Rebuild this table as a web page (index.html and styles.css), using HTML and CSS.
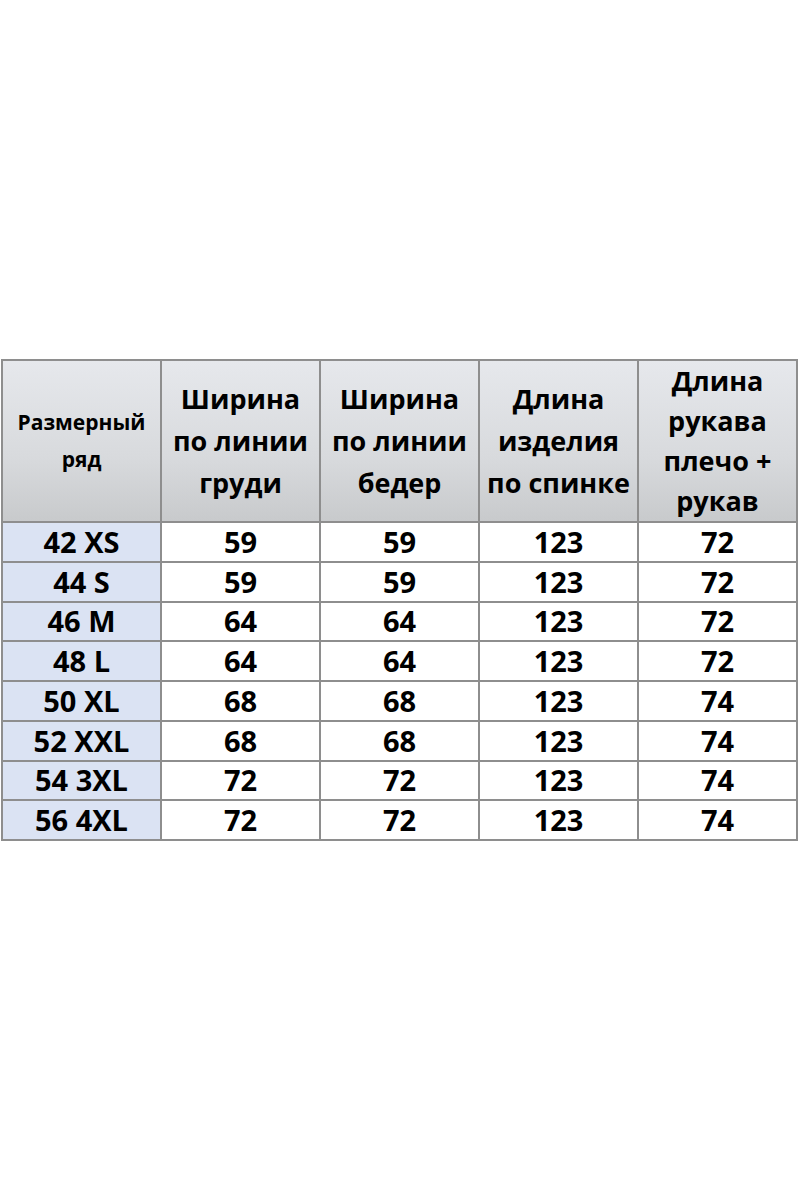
FILE: index.html
```html
<!DOCTYPE html>
<html lang="ru">
<head>
<meta charset="utf-8">
<title>Таблица размеров</title>
<link rel="stylesheet" href="styles.css">
</head>
<body>
<main class="page">
  <table class="sizes">
    <thead>
      <tr>
        <th class="c-size">Размерный<br>ряд</th>
        <th>Ширина<br>по линии<br>груди</th>
        <th>Ширина<br>по линии<br>бедер</th>
        <th>Длина<br>изделия<br>по спинке</th>
        <th class="c-four">Длина<br>рукава<br>плечо +<br>рукав</th>
      </tr>
    </thead>
    <tbody>
      <tr><td class="size">42 XS</td><td>59</td><td>59</td><td>123</td><td>72</td></tr>
      <tr><td class="size">44 S</td><td>59</td><td>59</td><td>123</td><td>72</td></tr>
      <tr><td class="size">46 M</td><td>64</td><td>64</td><td>123</td><td>72</td></tr>
      <tr><td class="size">48 L</td><td>64</td><td>64</td><td>123</td><td>72</td></tr>
      <tr><td class="size">50 XL</td><td>68</td><td>68</td><td>123</td><td>74</td></tr>
      <tr><td class="size">52 XXL</td><td>68</td><td>68</td><td>123</td><td>74</td></tr>
      <tr><td class="size">54 3XL</td><td>72</td><td>72</td><td>123</td><td>74</td></tr>
      <tr><td class="size">56 4XL</td><td>72</td><td>72</td><td>123</td><td>74</td></tr>
    </tbody>
  </table>
</main>
</body>
</html>
```

FILE: styles.css
```css
html, body {
  margin: 0;
  padding: 0;
  background: #ffffff;
}

.page {
  padding: 359px 0 0 1px;
}

.sizes {
  border-collapse: collapse;
  table-layout: fixed;
  width: 797px;
  font-family: "Open Sans", "Liberation Sans", sans-serif;
  font-weight: 700;
  color: #000000;
}

.sizes th,
.sizes td {
  border: 2px solid #8e8e8e;
  text-align: center;
  vertical-align: middle;
  padding: 0;
}

.sizes th {
  height: 160px;
  font-size: 27px;
  line-height: 42px;
  background: linear-gradient(to bottom, #e6e8ec 0%, #d8dadd 60%, #c8cacc 100%);
}

.sizes th.c-four {
  line-height: 40px;
}

.sizes th.c-size {
  font-size: 21px;
  line-height: 37px;
}

.sizes td {
  height: 37.75px;
  font-size: 29px;
  line-height: 36px;
  background: #ffffff;
}

.sizes td.size {
  background: #dbe3f3;
}
```
